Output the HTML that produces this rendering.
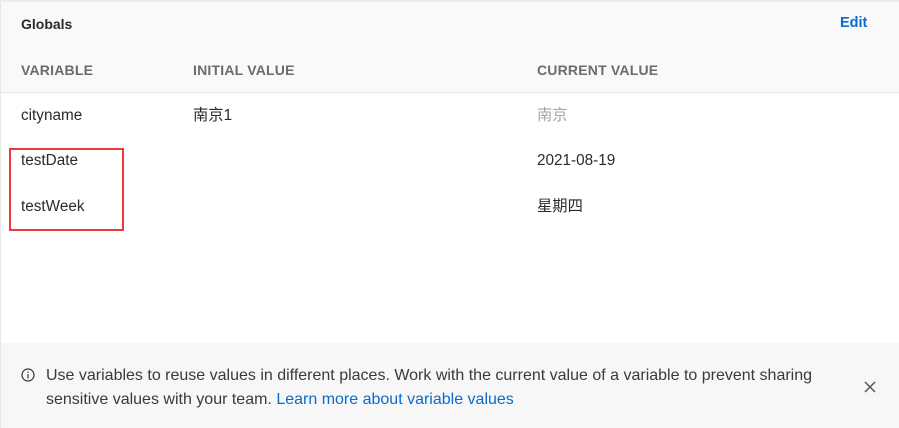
<!DOCTYPE html>
<html><head><meta charset="utf-8"><style>
*{margin:0;padding:0;box-sizing:border-box}
body{width:899px;height:428px;background:#fff;font-family:"Liberation Sans","Noto Sans CJK SC",sans-serif;position:relative;overflow:hidden;color:#212121}
.top{position:absolute;left:0;top:0;width:899px;height:93px;background:#f9f9f9;border-top:2px solid #ececec;border-bottom:1px solid #e6e6e6;border-left:1px solid #e6e6e6}
.t{position:absolute;white-space:nowrap;line-height:20px}
.h{font-size:14px;font-weight:bold;color:#6b6b6b;top:60px;letter-spacing:0.2px}
.r{font-size:15.3px;color:#2a2a2a}
.ban{position:absolute;left:0;top:343px;width:899px;height:85px;background:#f7f7f7;border-left:1px solid #e6e6e6}
.lb{position:absolute;left:0;top:93px;width:1px;height:250px;background:#e6e6e6}
</style></head><body>
<div class="top"></div>
<div class="lb"></div>
<div class="t" style="left:21px;top:14px;font-size:14px;font-weight:bold;color:#2a2a2a">Globals</div>
<div class="t" style="left:840px;top:13px;font-size:14.5px;font-weight:bold;color:#0b6bcb">Edit</div>
<div class="t h" style="left:21px">VARIABLE</div>
<div class="t h" style="left:193px">INITIAL VALUE</div>
<div class="t h" style="left:537px">CURRENT VALUE</div>
<div class="t r" style="left:21px;top:106px">cityname</div>
<div class="t r" style="left:193px;top:106px">南京1</div>
<div class="t r" style="left:537px;top:106px;color:#a6a6a6">南京</div>
<div class="t r" style="left:21px;top:151px">testDate</div>
<div class="t r" style="left:537px;top:151px">2021-08-19</div>
<div class="t r" style="left:21px;top:197px">testWeek</div>
<div class="t r" style="left:537px;top:197px">星期四</div>
<div style="position:absolute;left:9px;top:148px;width:115px;height:83px;border:2px solid #f0383c"></div>
<div class="ban"></div>
<svg style="position:absolute;left:21px;top:368px" width="14" height="14" viewBox="0 0 14 14"><circle cx="7" cy="7" r="6" fill="none" stroke="#333" stroke-width="1.2"/><rect x="6.4" y="6" width="1.2" height="4.5" fill="#333"/><rect x="6.4" y="3.5" width="1.2" height="1.3" fill="#333"/></svg>
<div class="t" style="left:46px;top:364px;font-size:16px;color:#3a3a3a;line-height:24px">Use variables to reuse values in different places. Work with the current value of a variable to prevent sharing<br>sensitive values with your team. <span style="color:#0b6bcb">Learn more about variable values</span></div>
<svg style="position:absolute;left:864px;top:381px" width="12" height="12" viewBox="0 0 12 12"><path d="M1 1L11 11M11 1L1 11" stroke="#555" stroke-width="1.5"/></svg>
</body></html>
